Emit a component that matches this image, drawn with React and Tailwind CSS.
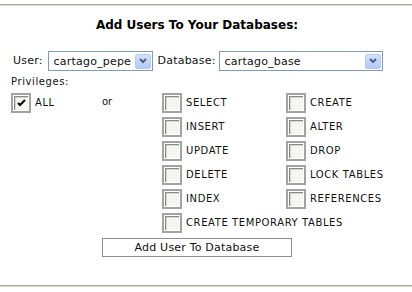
import React from 'react';

const font = { fontFamily: '"DejaVu Sans", Verdana, sans-serif' };

const Box = ({ checked }) => (
  <span className="flex h-[20px] w-[20px] shrink-0 items-center justify-center border-2 border-[#a3a3a3] bg-white">
    <span className="relative h-[14px] w-[14px] border-l border-t border-[#8a8a8a] bg-[#f6f6f0] shadow-[inset_1px_1px_0_#d6d6cc]">
      {checked && (
        <svg className="absolute left-[1px] top-[1px]" width="11" height="11" viewBox="0 0 11 11">
          <path d="M2 5 L4 7 L9 2" stroke="#000" strokeWidth="2" fill="none" />
        </svg>
      )}
    </span>
  </span>
);

const Check = ({ label, checked, className = '' }) => (
  <div className={`flex items-start gap-[4px] ${className}`}>
    <Box checked={checked} />
    <span className="pt-[4px] text-[10px] leading-[12px] tracking-[0.6px] text-[#111]">{label}</span>
  </div>
);

const Select = ({ value, width }) => (
  <div className={`flex h-[20px] items-center border border-[#7f9db9] bg-white pl-[5px] pr-[1px] ${width}`}>
    <span className="flex-1 text-[11px] leading-[13px] text-[#111]">{value}</span>
    <span className="flex h-[15px] w-[16px] items-center justify-center rounded-[2px] border border-[#b7c8f4] bg-gradient-to-b from-[#d5e1fc] to-[#b3c8f7]">
      <svg width="8" height="6" viewBox="0 0 8 6">
        <path d="M1 1 L4 4 L7 1" stroke="#4d6185" strokeWidth="2" fill="none" />
      </svg>
    </span>
  </div>
);

const left = ['SELECT', 'INSERT', 'UPDATE', 'DELETE', 'INDEX'];
const right = ['CREATE', 'ALTER', 'DROP', 'LOCK TABLES', 'REFERENCES'];

export default function App() {
  return (
    <div className="h-[292px] w-[412px] bg-white pt-[4px]" style={font}>
      <div className="h-[1px] bg-[#aca899]" />
      <div className="h-[1px] bg-[#ddd9c9]" />

      <h1 className="mt-[11px] pr-[18px] text-center text-[12px] font-bold leading-[16px] text-black">
        Add Users To Your Databases:
      </h1>

      <div className="mt-[18px] flex items-center pl-[13px] text-[11px] tracking-[0.2px] text-[#111]">
        <span className="mr-[5px]">User:</span>
        <Select value="cartago_pepe" width="w-[105px]" />
        <span className="ml-[5px] mr-[3px]">Database:</span>
        <Select value="cartago_base" width="w-[164px]" />
      </div>

      <div className="mt-[5px] pl-[11px] text-[10px] leading-[12px] tracking-[0.6px] text-[#111]">Privileges:</div>

      <div className="mt-[5px] grid auto-rows-[24px] grid-cols-[91px_60px_124px_1fr] pl-[11px]">
        <Check label="ALL" checked />
        <span className="pt-[3px] text-[10px] leading-[12px] text-[#111]">or</span>
        {left.map((l, i) => (
          <React.Fragment key={l}>
            {i > 0 && <span className="col-span-2" />}
            <Check label={l} />
            <Check label={right[i]} />
          </React.Fragment>
        ))}
        <Check label="CREATE TEMPORARY TABLES" className="col-start-3 col-span-2" />
      </div>

      <div className="mt-[1px] flex pl-[102px]">
        <button className="h-[19px] w-[190px] border border-[#8f8f8f] bg-white text-[11px] leading-[13px] tracking-[0.2px] text-[#111]">
          Add User To Database
        </button>
      </div>

      <div className="mt-[28px] h-[1px] bg-[#aca899]" />
      <div className="h-[1px] bg-[#ddd9c9]" />
    </div>
  );
}
